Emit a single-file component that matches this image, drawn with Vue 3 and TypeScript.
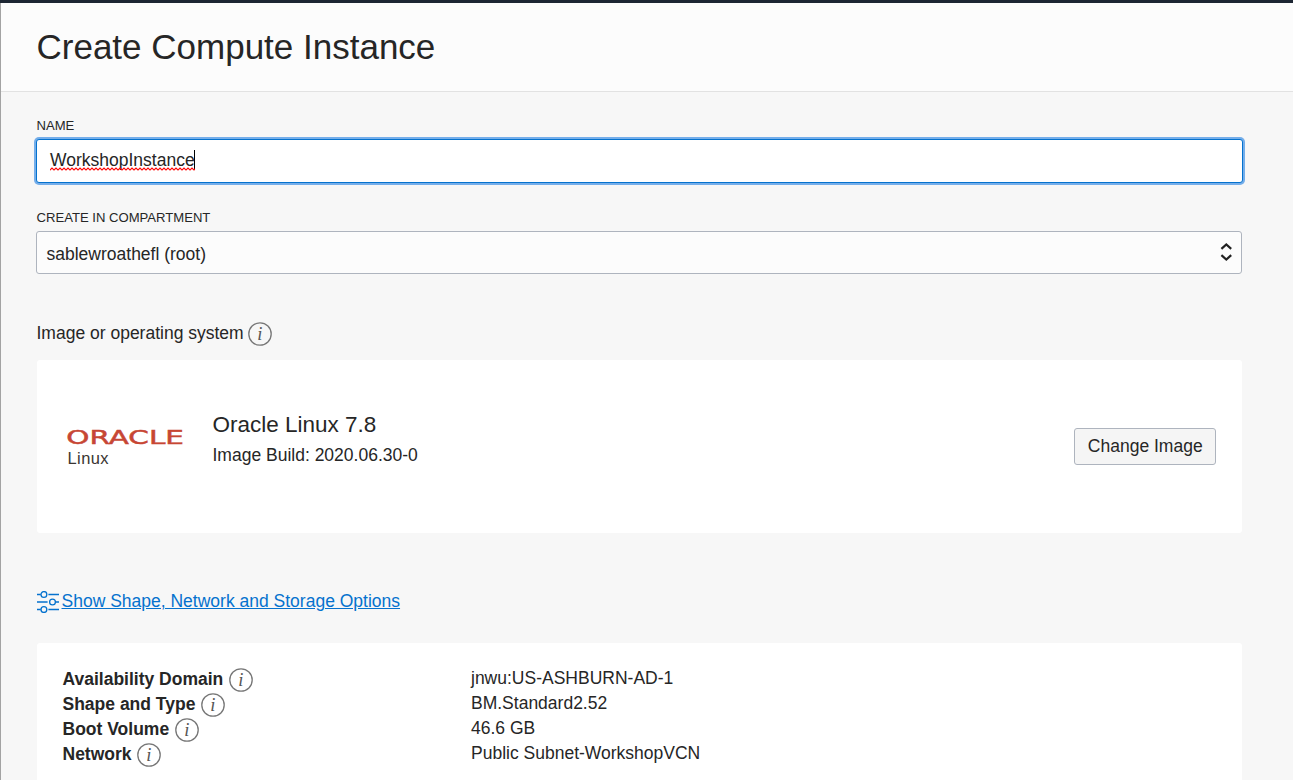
<script setup lang="ts">
import { ref } from 'vue'

interface Detail {
  label: string
  value: string
}

const instanceName = ref<string>('WorkshopInstance')
const compartment = ref<string>('sablewroathefl (root)')

const details: Detail[] = [
  { label: 'Availability Domain', value: 'jnwu:US-ASHBURN-AD-1' },
  { label: 'Shape and Type', value: 'BM.Standard2.52' },
  { label: 'Boot Volume', value: '46.6 GB' },
  { label: 'Network', value: 'Public Subnet-WorkshopVCN' },
]
</script>

<template>
  <div class="panel">
    <header class="header">
      <h1 class="title">Create Compute Instance</h1>
    </header>

    <main class="content">
      <label class="caption">NAME</label>
      <div class="name-input">
        <span class="name-value">{{ instanceName }}
          <svg class="squiggle" width="145" height="4" aria-hidden="true">
            <defs>
              <pattern id="wave" width="4" height="4" patternUnits="userSpaceOnUse">
                <path d="M-1 2 L0 3 L2 1 L4 3 L5 2" fill="none" stroke="#f00" stroke-width="1.2" />
              </pattern>
            </defs>
            <rect width="145" height="4" fill="url(#wave)" />
          </svg>
        </span>
        <span class="caret"></span>
      </div>

      <label class="caption compartment-caption">CREATE IN COMPARTMENT</label>
      <div class="select">
        <span>{{ compartment }}</span>
        <svg class="chevrons" width="12" height="20" viewBox="0 0 12 20">
          <path d="M1.4 6.8 L6.3 2.5 L11.2 6.8 M1.4 13.2 L6.3 17.5 L11.2 13.2" fill="none" stroke="#222" stroke-width="2.2" />
        </svg>
      </div>

      <div class="section-label">
        <span>Image or operating system</span>
        <svg class="info" width="24" height="24" viewBox="0 0 24 24">
          <circle cx="12" cy="12" r="11.2" />
          <text x="11.8" y="17.5">i</text>
        </svg>
      </div>

      <section class="card image-card">
        <div class="logo">
          <svg width="120" height="24" viewBox="0 0 120 24">
            <text class="logo-name" transform="translate(-0.7 17.5) scale(1.4 1)" x="0" y="0" textLength="84" lengthAdjust="spacingAndGlyphs">ORACLE</text>
          </svg>
          <span class="logo-sub">Linux</span>
        </div>
        <div class="image-text">
          <div class="image-name">Oracle Linux 7.8</div>
          <div class="image-build">Image Build: 2020.06.30-0</div>
        </div>
        <button class="change" type="button">Change Image</button>
      </section>

      <a class="options">
        <svg width="22" height="22" viewBox="0 0 22 22">
          <g fill="none" stroke="#0572ce" stroke-width="1.3">
            <path d="M0 3.5H3.8M11.4 3.5H22M0 11H10.6M18.6 11H22M0 18.5H3.8M11.4 18.5H22" />
            <circle cx="6.9" cy="3.5" r="2.9" />
            <circle cx="15.5" cy="11" r="2.9" />
            <circle cx="6.9" cy="18.5" r="2.9" />
          </g>
        </svg>
        <span>Show Shape, Network and Storage Options</span>
      </a>

      <section class="card detail-card">
        <div v-for="item in details" :key="item.label" class="row">
          <div class="row-label">
            <span>{{ item.label }}</span>
            <svg class="info" width="24" height="24" viewBox="0 0 24 24">
              <circle cx="12" cy="12" r="11.2" />
              <text x="11.8" y="17.5">i</text>
            </svg>
          </div>
          <div class="row-value">{{ item.value }}</div>
        </div>
      </section>
    </main>
  </div>
</template>

<style>
body {
  margin: 0;
  overflow: hidden;
}
</style>

<style scoped>
.panel {
  box-sizing: border-box;
  width: 1293px;
  height: 780px;
  overflow: hidden;
  border-top: 3px solid #1d2633;
  background: linear-gradient(to right, #a3a3a3 1px, #f7f7f7 1px);
  color: #262626;
  font-family: "Liberation Sans", Arial, sans-serif;
  font-size: 17.5px;
}
.header {
  box-sizing: border-box;
  height: 89px;
  margin-left: 1px;
  padding: 24px 0 0 35.5px;
  border-bottom: 1px solid #e2e2e2;
  background: #fcfcfc;
}
.title {
  margin: 0;
  font-size: 35px;
  font-weight: 400;
  line-height: 40px;
}
.content {
  display: flex;
  flex-direction: column;
  padding: 26px 0 0 36px;
}
.caption {
  height: 16px;
  padding-left: 0.5px;
  font-size: 13.1px;
  line-height: 16px;
}
.name-input {
  box-sizing: border-box;
  display: flex;
  align-items: center;
  width: 1207px;
  height: 44px;
  margin-top: 5px;
  padding: 0 13px 2px;
  border: 1px solid #0572ce;
  border-radius: 3px;
  background: #fff;
  box-shadow: 0 0 0 2px #75aeea;
}
.name-value {
  position: relative;
  line-height: 20px;
}
.squiggle {
  position: absolute;
  left: 0;
  top: 17px;
}
.caret {
  width: 1px;
  height: 20px;
  margin-left: -1px;
  background: #000;
}
.compartment-caption {
  margin-top: 27px;
}
.select {
  box-sizing: border-box;
  display: flex;
  align-items: center;
  justify-content: space-between;
  width: 1206px;
  height: 43px;
  margin-top: 5px;
  padding: 3px 9px 0 9.5px;
  border: 1px solid #aeb4be;
  border-radius: 3px;
  background: #fcfcfc;
}
.chevrons {
  margin-top: -4px;
}
.section-label {
  display: flex;
  align-items: flex-start;
  gap: 4.5px;
  height: 24px;
  margin-top: 48px;
  padding-left: 0.5px;
  line-height: 22px;
}
.info {
  flex: none;
}
.info circle {
  fill: none;
  stroke: #777;
  stroke-width: 1.3;
}
.info text {
  fill: #555;
  font: italic 18.5px "Liberation Serif", serif;
  text-anchor: middle;
}
.card {
  box-sizing: border-box;
  width: 1205px;
  margin-left: 1px;
  border-radius: 3px;
  background: #fff;
}
.image-card {
  display: flex;
  align-items: flex-start;
  height: 173px;
  margin-top: 14px;
  padding: 50px 26px 0 30px;
}
.logo {
  display: flex;
  flex-direction: column;
  width: 120px;
  margin-top: 16px;
}
.logo svg {
  overflow: visible;
}
.logo-name {
  fill: #c74634;
  font: 400 19.6px "DejaVu Sans", sans-serif;
  stroke: #c74634;
  stroke-width: 0.6px;
  vector-effect: non-scaling-stroke;
}
.logo-sub {
  padding-left: 0.5px;
  color: #3a3632;
  font-size: 16.5px;
  letter-spacing: 0.4px;
  line-height: 16px;
}
.image-text {
  flex: 1;
  margin-left: 25.5px;
}
.image-name {
  font-size: 22.5px;
  line-height: 30px;
}
.image-build {
  line-height: 30px;
}
.change {
  box-sizing: border-box;
  width: 142px;
  height: 37px;
  margin-top: 18px;
  padding: 0 0 1px 0.5px;
  border: 1px solid #aeb4be;
  border-radius: 3px;
  background: #f5f5f5;
  color: #262626;
  font: inherit;
}
.options {
  display: flex;
  align-items: center;
  align-self: flex-start;
  gap: 2.5px;
  height: 24px;
  margin: 57px 0 0 1px;
  color: #0572ce;
}
.options svg {
  margin-top: -1px;
}
.options span {
  line-height: 22px;
  margin-top: -2px;
  text-decoration: underline;
}
.detail-card {
  height: 160px;
  margin-top: 29px;
  padding: 25px 26px 0 25.5px;
}
.row {
  display: grid;
  grid-template-columns: 408.5px 1fr;
  height: 25px;
}
.row-label {
  display: flex;
  gap: 5.5px;
  font-weight: 700;
  line-height: 23px;
}
.row-value {
  line-height: 21px;
}
</style>
